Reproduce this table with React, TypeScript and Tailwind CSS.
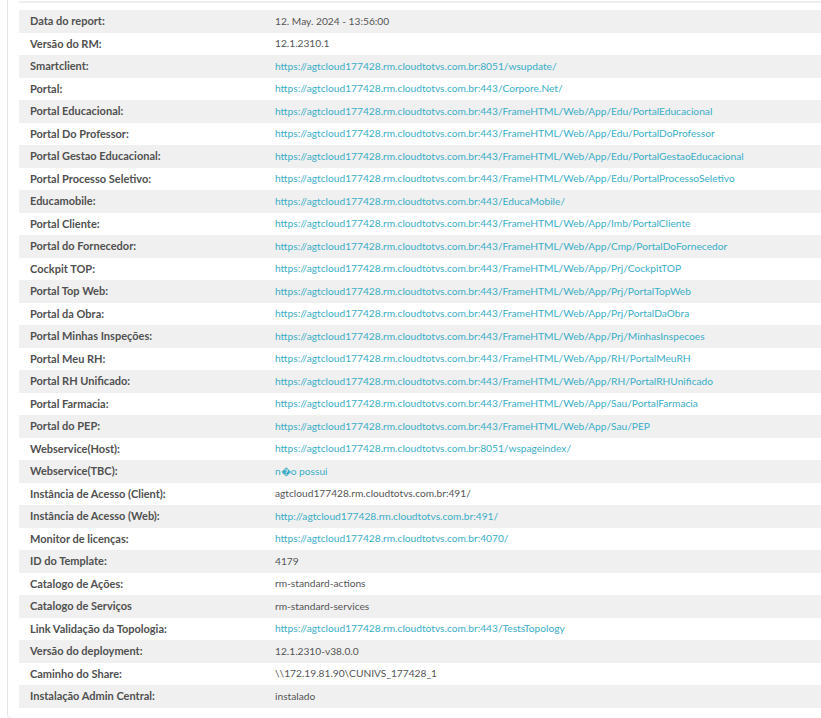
import React from "react";

type Row = { label: string; value: string; link?: boolean };

const host = "https://agtcloud177428.rm.cloudtotvs.com.br";

const rows: Row[] = [
  { label: "Data do report:", value: "12. May. 2024 - 13:56:00" },
  { label: "Versão do RM:", value: "12.1.2310.1" },
  { label: "Smartclient:", value: host + ":8051/wsupdate/", link: true },
  { label: "Portal:", value: host + ":443/Corpore.Net/", link: true },
  { label: "Portal Educacional:", value: host + ":443/FrameHTML/Web/App/Edu/PortalEducacional", link: true },
  { label: "Portal Do Professor:", value: host + ":443/FrameHTML/Web/App/Edu/PortalDoProfessor", link: true },
  { label: "Portal Gestao Educacional:", value: host + ":443/FrameHTML/Web/App/Edu/PortalGestaoEducacional", link: true },
  { label: "Portal Processo Seletivo:", value: host + ":443/FrameHTML/Web/App/Edu/PortalProcessoSeletivo", link: true },
  { label: "Educamobile:", value: host + ":443/EducaMobile/", link: true },
  { label: "Portal Cliente:", value: host + ":443/FrameHTML/Web/App/Imb/PortalCliente", link: true },
  { label: "Portal do Fornecedor:", value: host + ":443/FrameHTML/Web/App/Cmp/PortalDoFornecedor", link: true },
  { label: "Cockpit TOP:", value: host + ":443/FrameHTML/Web/App/Prj/CockpitTOP", link: true },
  { label: "Portal Top Web:", value: host + ":443/FrameHTML/Web/App/Prj/PortalTopWeb", link: true },
  { label: "Portal da Obra:", value: host + ":443/FrameHTML/Web/App/Prj/PortalDaObra", link: true },
  { label: "Portal Minhas Inspeções:", value: host + ":443/FrameHTML/Web/App/Prj/MinhasInspecoes", link: true },
  { label: "Portal Meu RH:", value: host + ":443/FrameHTML/Web/App/RH/PortalMeuRH", link: true },
  { label: "Portal RH Unificado:", value: host + ":443/FrameHTML/Web/App/RH/PortalRHUnificado", link: true },
  { label: "Portal Farmacia:", value: host + ":443/FrameHTML/Web/App/Sau/PortalFarmacia", link: true },
  { label: "Portal do PEP:", value: host + ":443/FrameHTML/Web/App/Sau/PEP", link: true },
  { label: "Webservice(Host):", value: host + ":8051/wspageindex/", link: true },
  { label: "Webservice(TBC):", value: "n\uFFFDo possui", link: true },
  { label: "Instância de Acesso (Client):", value: "agtcloud177428.rm.cloudtotvs.com.br:491/" },
  { label: "Instância de Acesso (Web):", value: "http://agtcloud177428.rm.cloudtotvs.com.br:491/", link: true },
  { label: "Monitor de licenças:", value: host + ":4070/", link: true },
  { label: "ID do Template:", value: "4179" },
  { label: "Catalogo de Ações:", value: "rm-standard-actions" },
  { label: "Catalogo de Serviços", value: "rm-standard-services" },
  { label: "Link Validação da Topologia:", value: host + ":443/TestsTopology", link: true },
  { label: "Versão do deployment:", value: "12.1.2310-v38.0.0" },
  { label: "Caminho do Share:", value: "\\\\172.19.81.90\\CUNIVS_177428_1" },
  { label: "Instalação Admin Central:", value: "instalado" },
];

export default function App() {
  return (
    <div className="h-[718px] w-[821px] overflow-hidden bg-white font-['Lato',sans-serif]">
      <div className="-mt-[20px] ml-[7px] w-[840px] rounded-b-[5px] border border-[#e3e3e3] pb-[10px] pl-[11px] pt-[20px]">
        <div className="border-t-2 border-[#eeeeee] pt-[7px]">
          {rows.map((r, i) => (
            <div
              key={i}
              className={`grid h-[22.5px] grid-cols-[256px_1fr] items-center ${i % 2 === 0 ? "bg-[#f0f0f0]" : "bg-white"}`}
            >
              <div className="whitespace-nowrap pl-[11px] text-[11px] font-bold text-[#505050]">{r.label}</div>
              <div
                className={`whitespace-nowrap text-[10.2px] ${r.link ? "text-[#3aaec6]" : "text-[#555555]"}`}
              >
                {r.value}
              </div>
            </div>
          ))}
        </div>
      </div>
    </div>
  );
}
